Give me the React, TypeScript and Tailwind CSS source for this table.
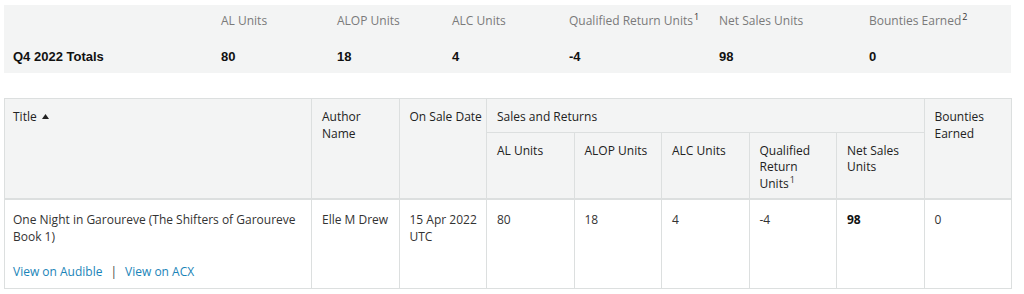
import React from 'react'

// ─── Data ─────────────────────────────────────────────────────────────────────

interface TotalCell {
  label: string
  value: string
  note?: string
}

const TOTALS: TotalCell[] = [
  { label: 'AL Units', value: '80' },
  { label: 'ALOP Units', value: '18' },
  { label: 'ALC Units', value: '4' },
  { label: 'Qualified Return Units', value: '-4', note: '1' },
  { label: 'Net Sales Units', value: '98' },
  { label: 'Bounties Earned', value: '0', note: '2' },
]

const ROW = {
  title: 'One Night in Garoureve (The Shifters of Garoureve Book 1)',
  author: 'Elle M Drew',
  onSale: '15 Apr 2022 UTC',
  al: '80',
  alop: '18',
  alc: '4',
  returns: '-4',
  net: '98',
  bounties: '0',
}

const UI_FONT = "font-['Open_Sans',_'Noto_Sans',_sans-serif]"
const BOLD_FONT = "font-['Liberation_Sans',_Arial,_sans-serif] font-bold text-[13px] leading-[16px] text-[#111]"
const th = 'border border-[#dcdfdf] px-[10px] pt-[10px] pb-[6px] text-left align-top font-normal'
const td = 'border border-[#dcdfdf] px-[10px] pt-[12px] pb-[7px] text-left align-top'

// footnote marker used in labels
function Note({ n }: { n: string }) {
  return <sup className="text-[9px] -top-[5px] ml-[1px] text-[#333]">{n}</sup>
}

// ─── Totals strip ─────────────────────────────────────────────────────────────

function TotalsStrip() {
  return (
    <div className="mx-[4px] mt-[5px] h-[68px] w-[1007px] bg-[#f3f4f4] pl-[9px] grid grid-cols-[208px_116px_115px_117px_150px_150px_1fr] grid-rows-[36px_32px]">
      <div />
      {TOTALS.map(t => (
        <div key={t.label} className={`${UI_FONT} pt-[8px] text-[12px] leading-[16px] text-[#7a7a7a]`}>
          {t.label}
          {t.note && <Note n={t.note} />}
        </div>
      ))}
      <div className={`${BOLD_FONT} pt-[8px]`}>Q4 2022 Totals</div>
      {TOTALS.map(t => (
        <div key={t.label} className={`${BOLD_FONT} pt-[8px]`}>
          {t.value}
        </div>
      ))}
    </div>
  )
}

// ─── Title sales table ────────────────────────────────────────────────────────

function SortUp() {
  return (
    <svg width="7" height="5" viewBox="0 0 7 5" className="inline-block ml-[5px] -mt-[2px]">
      <polygon points="3.5,0 7,5 0,5" fill="#222" />
    </svg>
  )
}

function SalesTable() {
  return (
    <table className={`${UI_FONT} ml-[4px] mt-[25px] w-[1007px] table-fixed border-collapse text-[12px] leading-[16.5px] text-[#333]`}>
      <colgroup>
        <col className="w-[307px]" />
        {Array.from({ length: 8 }).map((_, i) => (
          <col key={i} className="w-[87.5px]" />
        ))}
      </colgroup>
      <thead className="bg-[#f3f4f4] text-[#222]">
        <tr>
          <th rowSpan={2} className={`${th} pl-[8px]`}>
            Title
            <SortUp />
          </th>
          <th rowSpan={2} className={th}>Author Name</th>
          <th rowSpan={2} className={`${th} pr-[4px]`}>On Sale Date</th>
          <th colSpan={5} className={th}>Sales and Returns</th>
          <th rowSpan={2} className={th}>Bounties Earned</th>
        </tr>
        <tr className="border-b-2 border-[#dcdfdf]">
          <th className={th}>AL Units</th>
          <th className={th}>ALOP Units</th>
          <th className={th}>ALC Units</th>
          <th className={th}>
            Qualified Return Units<Note n="1" />
          </th>
          <th className={th}>Net Sales Units</th>
        </tr>
      </thead>
      <tbody>
        <tr>
          <td className={`${td} pl-[8px]`}>
            <div>{ROW.title}</div>
            <div className="mt-[19px] flex items-center">
              <a href="#" className="text-[#1a84b8]">View on Audible</a>
              <span className="mx-[8px] text-[#444]">|</span>
              <a href="#" className="text-[#1a84b8]">View on ACX</a>
            </div>
          </td>
          <td className={td}>{ROW.author}</td>
          <td className={`${td} pr-[4px]`}>{ROW.onSale}</td>
          <td className={td}>{ROW.al}</td>
          <td className={td}>{ROW.alop}</td>
          <td className={td}>{ROW.alc}</td>
          <td className={td}>{ROW.returns}</td>
          <td className={`${td} font-bold text-[#111]`}>{ROW.net}</td>
          <td className={td}>{ROW.bounties}</td>
        </tr>
      </tbody>
    </table>
  )
}

export default function App() {
  return (
    <div className="w-[1024px] h-[294px] bg-white overflow-hidden">
      <TotalsStrip />
      <SalesTable />
    </div>
  )
}
